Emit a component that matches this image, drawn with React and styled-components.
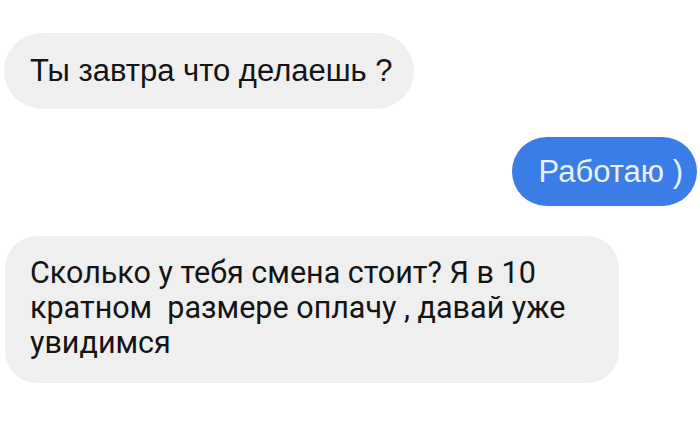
import React from 'react';
import styled, { createGlobalStyle } from 'styled-components';

const GlobalStyle = createGlobalStyle`
  body {
    margin: 0;
    background: #ffffff;
    font-family: "Liberation Sans", Arial, sans-serif;
  }
`;

// chat column
const Chat = styled.div`
  display: flex;
  flex-direction: column;
  align-items: flex-start;
  width: 700px;
  height: 437px;
  padding: 33px 3px 0 4px;
  box-sizing: border-box;
  overflow: hidden;
`;

const Bubble = styled.div`
  display: flex;
  align-items: center;
  box-sizing: border-box;
  height: ${p => p.$h}px;
  margin-top: ${p => p.$gap || 0}px;
  padding: ${p => p.$pad};
  border-radius: ${p => p.$radius}px;
  background: ${p => (p.$mine ? '#3b7de6' : '#efefef')};
  color: ${p => (p.$mine ? '#eaf2fd' : '#141414')};
  font-size: ${p => p.$size}px;
  align-self: ${p => (p.$mine ? 'flex-end' : 'flex-start')};
  white-space: nowrap;
`;

const LongBubble = styled.div`
  box-sizing: border-box;
  width: 614px;
  margin-top: 30px;
  margin-left: 1px;
  padding: 19px 20px 23px 25px;
  border-radius: 32px;
  background: #efefef;
  color: #141414;
  font-family: Roboto, "Liberation Sans", sans-serif;
  font-size: 30.5px;
  line-height: 35px;
  white-space: pre;
`;

export default function App() {
  return (
    <>
      <GlobalStyle />
      <Chat>
        <Bubble $h={76} $pad="0 21px 0 26px" $radius={38} $size={31}>
          Ты завтра что делаешь ?
        </Bubble>
        <Bubble $mine $h={69} $gap={28} $pad="0 14px 0 27px" $radius={35} $size={31}>
          Работаю )
        </Bubble>
        <LongBubble>
          {'Сколько у тебя смена стоит? Я в 10\nкратном  размере оплачу , давай уже\nувидимся'}
        </LongBubble>
      </Chat>
    </>
  );
}
